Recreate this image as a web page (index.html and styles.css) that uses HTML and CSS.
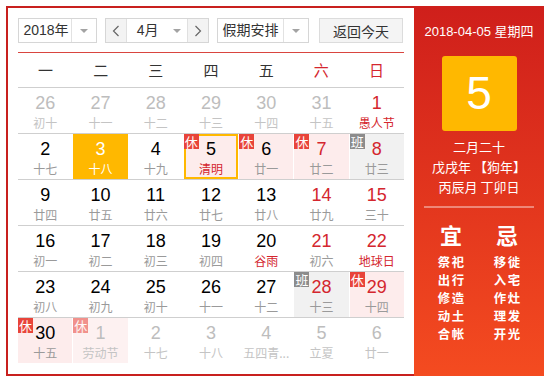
FILE: index.html
```html
<!doctype html>
<html lang="zh-CN">
<head>
    <meta charset="utf-8">
    <meta name="viewport" content="width=device-width, initial-scale=1">
    <title>万年历</title>
    <link rel="stylesheet" href="styles.css">
</head>
<body>

    <div class="calendar">
        <div class="main">
            <div class="toolbar">
                <div class="select year">
                    <span class="select-text">2018年</span>
                    <span class="select-arrow"><i class="caret"></i></span>
                </div>
                <div class="month-group">
                    <span class="nav">
                        <svg width="8" height="12" viewBox="0 0 8 12"><polyline points="6.5,1 1.5,6 6.5,11" fill="none" stroke="#666" stroke-width="1.2"/></svg>
                    </span>
                    <span class="select-text month">4月</span>
                    <span class="select-arrow plain"><i class="caret"></i></span>
                    <span class="nav">
                        <svg width="8" height="12" viewBox="0 0 8 12"><polyline points="1.5,1 6.5,6 1.5,11" fill="none" stroke="#666" stroke-width="1.2"/></svg>
                    </span>
                </div>
                <div class="select holiday">
                    <span class="select-text">假期安排</span>
                    <span class="select-arrow"><i class="caret"></i></span>
                </div>
                <button class="today-btn">返回今天</button>
            </div>

            <div class="weekdays">
                <span>一</span><span>二</span><span>三</span><span>四</span><span>五</span>
                <span class="red">六</span><span class="red">日</span>
            </div>

            <div class="week">
                <div class="day other"><b>26</b><em>初十</em></div>
                <div class="day other"><b>27</b><em>十一</em></div>
                <div class="day other"><b>28</b><em>十二</em></div>
                <div class="day other"><b>29</b><em>十三</em></div>
                <div class="day other"><b>30</b><em>十四</em></div>
                <div class="day other"><b>31</b><em>十五</em></div>
                <div class="day weekend festival"><b>1</b><em>愚人节</em></div>
            </div>
            <div class="week">
                <div class="day"><b>2</b><em>十七</em></div>
                <div class="day selected"><b>3</b><em>十八</em></div>
                <div class="day"><b>4</b><em>十九</em></div>
                <div class="day rest today festival"><span class="badge">休</span><b>5</b><em>清明</em></div>
                <div class="day rest"><span class="badge">休</span><b>6</b><em>廿一</em></div>
                <div class="day rest weekend"><span class="badge">休</span><b>7</b><em>廿二</em></div>
                <div class="day work weekend"><span class="badge">班</span><b>8</b><em>廿三</em></div>
            </div>
            <div class="week">
                <div class="day"><b>9</b><em>廿四</em></div>
                <div class="day"><b>10</b><em>廿五</em></div>
                <div class="day"><b>11</b><em>廿六</em></div>
                <div class="day"><b>12</b><em>廿七</em></div>
                <div class="day"><b>13</b><em>廿八</em></div>
                <div class="day weekend"><b>14</b><em>廿九</em></div>
                <div class="day weekend"><b>15</b><em>三十</em></div>
            </div>
            <div class="week">
                <div class="day"><b>16</b><em>初一</em></div>
                <div class="day"><b>17</b><em>初二</em></div>
                <div class="day"><b>18</b><em>初三</em></div>
                <div class="day"><b>19</b><em>初四</em></div>
                <div class="day festival"><b>20</b><em>谷雨</em></div>
                <div class="day weekend"><b>21</b><em>初六</em></div>
                <div class="day weekend festival"><b>22</b><em>地球日</em></div>
            </div>
            <div class="week">
                <div class="day"><b>23</b><em>初八</em></div>
                <div class="day"><b>24</b><em>初九</em></div>
                <div class="day"><b>25</b><em>初十</em></div>
                <div class="day"><b>26</b><em>十一</em></div>
                <div class="day"><b>27</b><em>十二</em></div>
                <div class="day work weekend"><span class="badge">班</span><b>28</b><em>十三</em></div>
                <div class="day rest weekend"><span class="badge">休</span><b>29</b><em>十四</em></div>
            </div>
            <div class="week last">
                <div class="day rest"><span class="badge">休</span><b>30</b><em>十五</em></div>
                <div class="day rest other"><span class="badge">休</span><b>1</b><em>劳动节</em></div>
                <div class="day other"><b>2</b><em>十七</em></div>
                <div class="day other"><b>3</b><em>十八</em></div>
                <div class="day other"><b>4</b><em>五四青...</em></div>
                <div class="day other"><b>5</b><em>立夏</em></div>
                <div class="day other"><b>6</b><em>廿一</em></div>
            </div>
        </div>

        <div class="side">
            <div class="side-date">2018-04-05 星期四</div>
            <div class="big-day">5</div>
            <div class="lunar">
                <p>二月二十</p>
                <p>戊戌年 【狗年】</p>
                <p>丙辰月 丁卯日</p>
            </div>
            <div class="divider"></div>
            <div class="almanac">
                <div class="col">
                    <h2>宜</h2>
                    <p>祭祀</p><p>出行</p><p>修造</p><p>动土</p><p>合帐</p>
                </div>
                <div class="col">
                    <h2>忌</h2>
                    <p>移徙</p><p>入宅</p><p>作灶</p><p>理发</p><p>开光</p>
                </div>
            </div>
        </div>
    </div>

 </body>
 </html>
```

FILE: styles.css
```css
body {
    margin: 0;
    padding: 6px;
    background: #fff;
    font-family: "Liberation Sans", Arial, "Noto Sans CJK SC", sans-serif;
    color: #333;
}

.calendar {
    display: flex;
    width: 538px;
    height: 370px;
}

.main {
    width: 408px;
    padding: 10px;
    border: 2px solid #c8201e;
    border-right: none;
    box-sizing: border-box;
}

/* toolbar */
.toolbar {
    display: flex;
    height: 25px;
    padding-bottom: 9px;
    border-bottom: 1px solid #d9453f;
    font-size: 14px;
}

.select,
.month-group {
    display: flex;
    height: 25px;
    border: 1px solid #d6d6d6;
    box-sizing: border-box;
    background: #fff;
}

.select-text {
    flex: 1;
    line-height: 23px;
    text-align: center;
    color: #333;
}

.select-arrow {
    width: 24px;
    border-left: 1px solid #e2e2e2;
    display: flex;
    justify-content: center;
    align-items: center;
}

.select-arrow.plain {
    border-left: none;
    width: 22px;
}

.caret {
    width: 0;
    height: 0;
    border-left: 4px solid transparent;
    border-right: 4px solid transparent;
    border-top: 4px solid #a3a3a3;
}

.year {
    width: 79px;
}

.year .select-text {
    padding-left: 2px;
}

.month-group {
    width: 104px;
    margin-left: 8px;
}

.month-group .month {
    flex: none;
    width: 38px;
    padding-left: 2px;
}

.nav {
    width: 21px;
    background: #f3f3f3;
    display: flex;
    justify-content: center;
    align-items: center;
}

.nav:first-child {
    border-right: 1px solid #e0e0e0;
}

.nav:last-child {
    border-left: 1px solid #e0e0e0;
}

.holiday {
    width: 92px;
    margin-left: 8px;
}

.today-btn {
    width: 84px;
    height: 25px;
    margin-left: 10px;
    border: 1px solid #dcdcdc;
    background: #f4f4f4;
    font-family: "Liberation Sans", "Noto Sans CJK SC", sans-serif;
    font-size: 14px;
    color: #333;
    padding: 0;
}

/* grid */
.weekdays {
    display: grid;
    grid-template-columns: repeat(7, 1fr);
    height: 34px;
    line-height: 34px;
    border-bottom: 1px solid #cfcfcf;
    text-align: center;
    font-family: "Noto Sans CJK SC", sans-serif;
    font-size: 15px;
    color: #333;
}

.weekdays .red {
    color: #d4262e;
}

.week {
    display: grid;
    grid-template-columns: repeat(7, 1fr);
    column-gap: 1px;
    height: 45px;
    border-bottom: 1px solid #cfcfcf;
}

.week.last {
    border-bottom: none;
}

.day {
    position: relative;
    min-width: 0;
    text-align: center;
    padding-top: 4px;
    box-sizing: border-box;
}

.day b {
    display: block;
    font-weight: normal;
    font-size: 18px;
    line-height: 22px;
    color: #000;
}

.day em {
    display: block;
    font-style: normal;
    font-family: "Noto Sans CJK SC", sans-serif;
    font-size: 12px;
    line-height: 17px;
    color: #9a9a9a;
    white-space: nowrap;
}

.day.weekend b {
    color: #d4262e;
}

.day.festival em {
    color: #d4262e;
}

.day.other b {
    color: #bdbdbd;
}

.day.other em {
    color: #c4c4c4;
}

.day.rest {
    background: #fdecec;
}

.day.rest.other {
    background: #fdf1f1;
}

.day.work {
    background: #f1f1f1;
}

.day.selected {
    background: #ffb800;
}

.day.selected b,
.day.selected em {
    color: #fff;
}

.day.today {
    box-shadow: inset 0 0 0 2px #ffb800;
}

.badge {
    position: absolute;
    top: 0;
    left: 0;
    width: 15px;
    height: 15px;
    line-height: 15px;
    font-family: "Noto Sans CJK SC", sans-serif;
    font-size: 13px;
    color: #fff;
    background: #e8443a;
    text-align: center;
}

.work .badge {
    background: #8c8c8c;
}

.other .badge {
    opacity: 0.55;
}

/* side panel */
.side {
    width: 130px;
    height: 370px;
    background: linear-gradient(#cf1f1b, #f44b20);
    color: #fff;
    text-align: center;
    padding-top: 16px;
    box-sizing: border-box;
    font-family: "Noto Sans CJK SC", sans-serif;
}

.side-date {
    font-family: "Liberation Sans", "Noto Sans CJK SC", sans-serif;
    font-size: 13px;
    line-height: 20px;
}

.big-day {
    width: 75px;
    height: 75px;
    margin: 14px auto 0;
    background: #ffb800;
    border-radius: 3px;
    font-family: "Liberation Sans", Arial, sans-serif;
    font-size: 46px;
    line-height: 75px;
}

.lunar {
    margin-top: 6px;
    font-size: 13px;
}

.lunar p {
    margin: 0;
    line-height: 20px;
}

.divider {
    height: 2px;
    margin: 9px 10px 0;
    background: rgba(255, 255, 255, 0.4);
}

.almanac {
    display: grid;
    grid-template-columns: 56px 56px;
    padding: 0 9px;
    margin-top: 12px;
}

.almanac h2 {
    margin: 0 0 5px;
    font-size: 22px;
    line-height: 28px;
    font-weight: bold;
}

.almanac p {
    margin: 0;
    font-size: 12.4px;
    letter-spacing: 1.5px;
    text-indent: 1.5px;
    line-height: 18px;
    font-weight: bold;
}
```
